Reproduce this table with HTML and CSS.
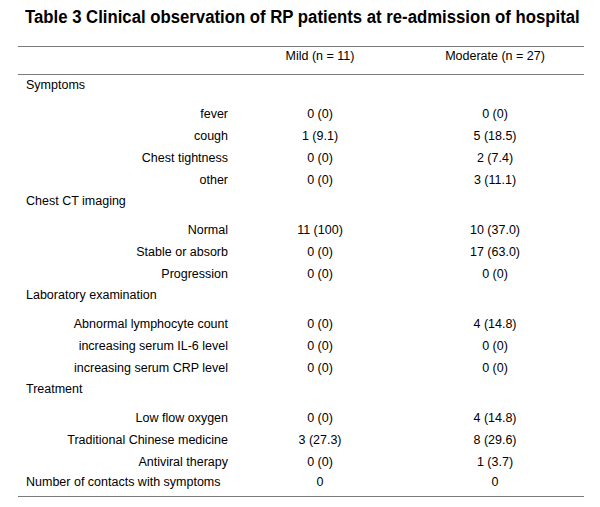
FILE: index.html
```html
<!DOCTYPE html>
<html>
<head>
<meta charset="utf-8">
<link rel="stylesheet" href="styles.css">
</head>
<body>
<div class="page">
  <h1 class="title">Table 3 Clinical observation of RP patients at re-admission of hospital</h1>
  <div class="table">
    <div class="row head">
      <div class="c1"></div>
      <div class="c2">Mild (n = 11)</div>
      <div class="c3">Moderate (n = 27)</div>
    </div>
    <div class="row cat first"><div class="c1 catlabel">Symptoms</div><div class="c2"></div><div class="c3"></div></div>
    <div class="row"><div class="c1">fever</div><div class="c2">0 (0)</div><div class="c3">0 (0)</div></div>
    <div class="row"><div class="c1">cough</div><div class="c2">1 (9.1)</div><div class="c3">5 (18.5)</div></div>
    <div class="row"><div class="c1">Chest tightness</div><div class="c2">0 (0)</div><div class="c3">2 (7.4)</div></div>
    <div class="row"><div class="c1">other</div><div class="c2">0 (0)</div><div class="c3">3 (11.1)</div></div>
    <div class="row cat"><div class="c1 catlabel">Chest CT imaging</div><div class="c2"></div><div class="c3"></div></div>
    <div class="row"><div class="c1">Normal</div><div class="c2">11 (100)</div><div class="c3">10 (37.0)</div></div>
    <div class="row"><div class="c1">Stable or absorb</div><div class="c2">0 (0)</div><div class="c3">17 (63.0)</div></div>
    <div class="row"><div class="c1">Progression</div><div class="c2">0 (0)</div><div class="c3">0 (0)</div></div>
    <div class="row cat"><div class="c1 catlabel">Laboratory examination</div><div class="c2"></div><div class="c3"></div></div>
    <div class="row"><div class="c1">Abnormal lymphocyte count</div><div class="c2">0 (0)</div><div class="c3">4 (14.8)</div></div>
    <div class="row"><div class="c1">increasing serum IL-6 level</div><div class="c2">0 (0)</div><div class="c3">0 (0)</div></div>
    <div class="row"><div class="c1">increasing serum CRP level</div><div class="c2">0 (0)</div><div class="c3">0 (0)</div></div>
    <div class="row cat"><div class="c1 catlabel">Treatment</div><div class="c2"></div><div class="c3"></div></div>
    <div class="row"><div class="c1">Low flow oxygen</div><div class="c2">0 (0)</div><div class="c3">4 (14.8)</div></div>
    <div class="row"><div class="c1">Traditional Chinese medicine</div><div class="c2">3 (27.3)</div><div class="c3">8 (29.6)</div></div>
    <div class="row"><div class="c1">Antiviral therapy</div><div class="c2">0 (0)</div><div class="c3">1 (3.7)</div></div>
    <div class="row last"><div class="c1 catlabel">Number of contacts with symptoms</div><div class="c2">0</div><div class="c3">0</div></div>
  </div>
</div>
</body>
</html>
```
FILE: styles.css
```css
html, body {
  margin: 0;
  padding: 0;
  background: #ffffff;
}
body {
  font-family: "Liberation Sans", Arial, Helvetica, sans-serif;
  color: #000000;
}
.page {
  width: 600px;
  height: 507px;
  padding-top: 6px;
  box-sizing: border-box;
  overflow: hidden;
}
.title {
  margin: 0 0 0 25px;
  font-size: 18px;
  font-weight: bold;
  line-height: 22px;
  color: #000000;
  white-space: nowrap;
  transform: scaleX(0.93);
  transform-origin: left center;
}
.table {
  margin: 17.5px 0 0 18px;
  width: 566px;
  border-top: 1.5px solid #7a7a7a;
  border-bottom: 1.5px solid #7a7a7a;
  font-size: 12.5px;
}
.row {
  display: grid;
  grid-template-columns: 232px 140px 1fr;
  box-sizing: border-box;
  padding-top: 2.5px;
  line-height: 22px;
  height: 22px;
}
.row.head {
  padding-top: 0;
  height: 28.5px;
  line-height: 18px;
  border-bottom: 1.5px solid #7a7a7a;
}
.row.cat {
  height: 28px;
  line-height: 20px;
}
.row.first {
  line-height: 14px;
  height: 25px;
}
.row.last {
  height: 26px;
  line-height: 18px;
}
.c1 {
  text-align: right;
  padding-right: 22px;
  white-space: nowrap;
}
.c1.catlabel {
  text-align: left;
  padding-left: 8px;
  padding-right: 0;
}
.c2 {
  text-align: center;
}
.c3 {
  text-align: center;
  padding-left: 16px;
}
```
